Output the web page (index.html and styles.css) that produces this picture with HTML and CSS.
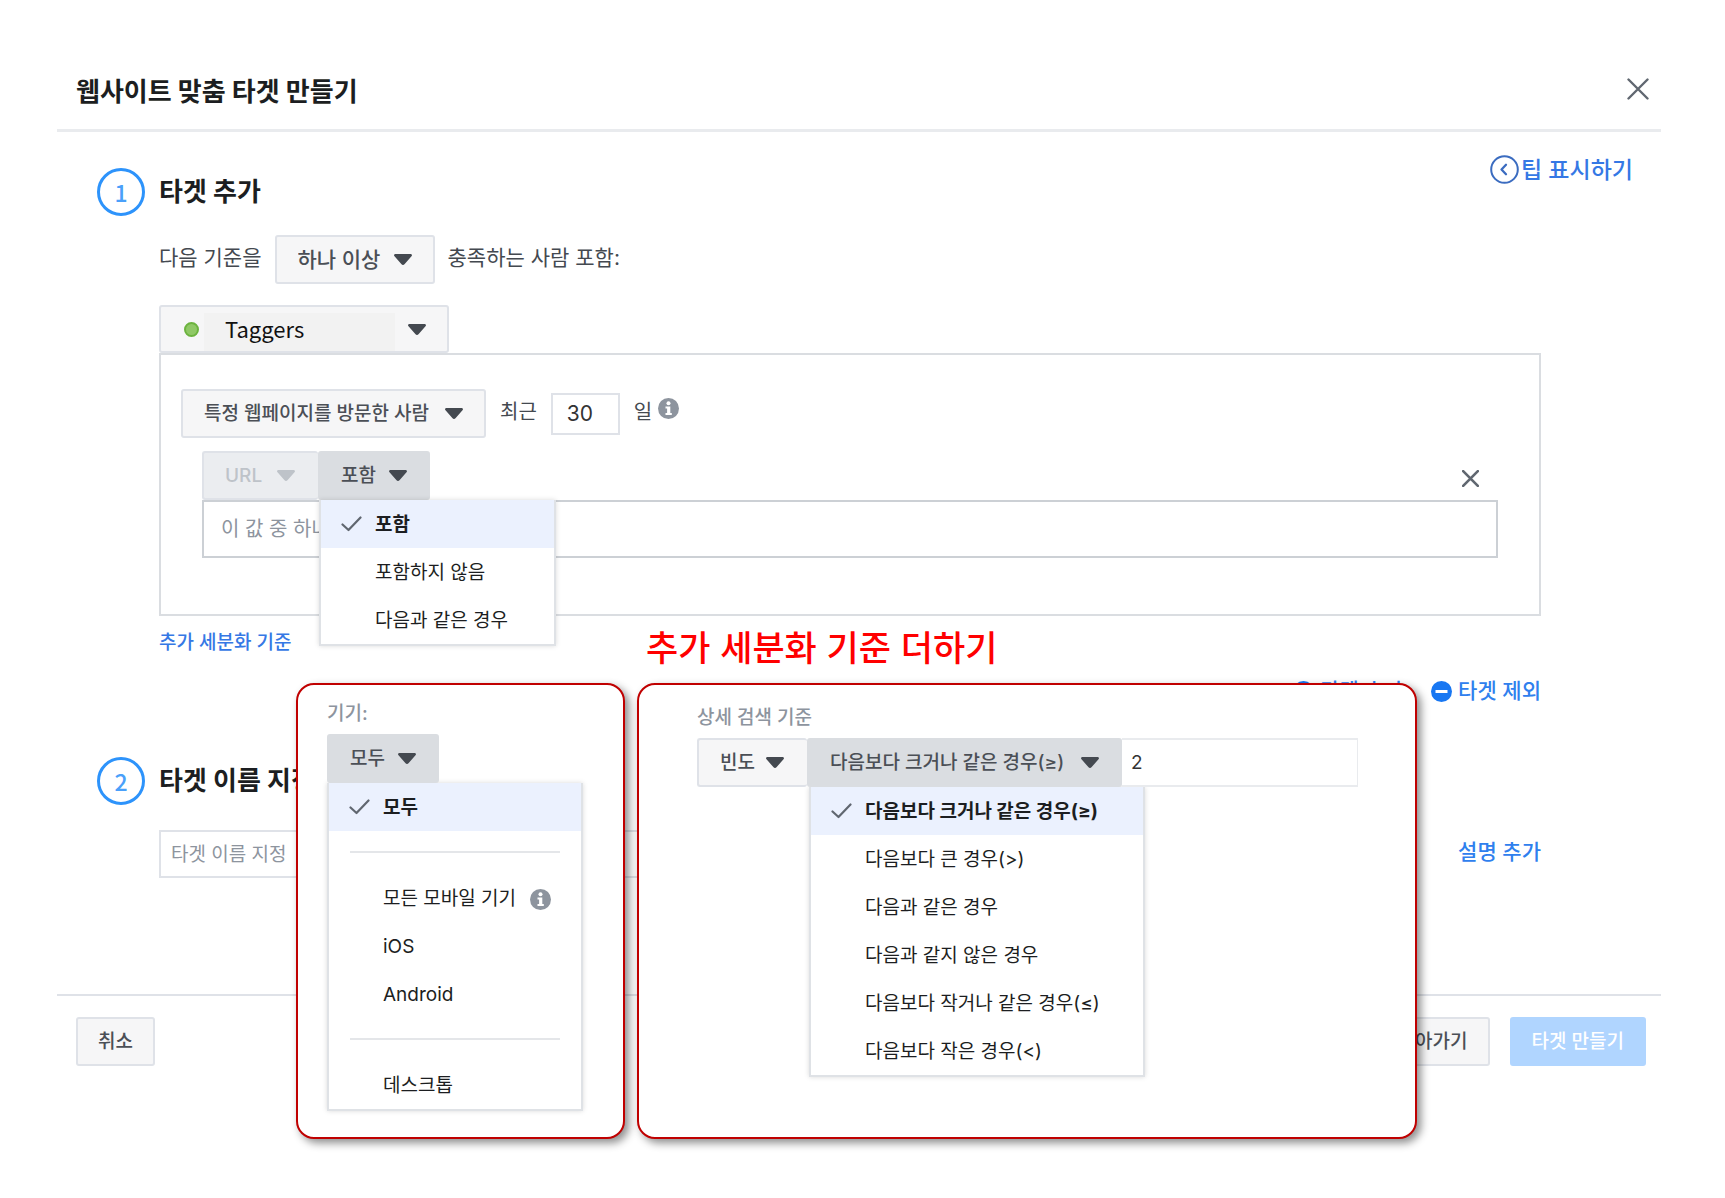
FILE: index.html
```html
<!DOCTYPE html>
<html lang="ko">
<head>
<meta charset="utf-8">
<meta name="viewport" content="width=device-width, initial-scale=1">
<title>웹사이트 맞춤 타겟 만들기</title>
<link rel="stylesheet" href="styles.css">
</head>
<body>
<svg class="sprite" aria-hidden="true">
  <symbol id="caret" viewBox="0 0 18 11"><path d="M1.5 0h15c1.300 0 2 1.300 1 2.300L10.700 10c-1 1.200-2.400 1.200-3.400 0L.5 2.300C-.5 1.300.2 0 1.500 0z" fill="currentColor"/></symbol>
  <symbol id="check" viewBox="0 0 21 16"><path d="M1.500 8.500l6 5.500L19.500 1.500" fill="none" stroke="currentColor" stroke-width="2.200" stroke-linecap="round" stroke-linejoin="round"/></symbol>
  <symbol id="cross" viewBox="0 0 22 22"><path d="M1.500 1.500l19 19M20.500 1.500l-19 19" fill="none" stroke="currentColor" stroke-linecap="round"/></symbol>
  <symbol id="info" viewBox="0 0 21 21"><circle cx="10.500" cy="10.500" r="10.500" fill="#8d949e"/><circle cx="10.500" cy="5.300" r="2" fill="#fff"/><path d="M7.500 8.500h4.800v6.500h1.500v2H7.500v-2h1.600v-4.500H7.500z" fill="#fff"/></symbol>
</svg>

<div class="page">
  <main class="dialog">
    <header class="dialog-header">
      <h1 class="title">웹사이트 맞춤 타겟 만들기</h1>
      <button class="icon-button dialog-close" type="button" aria-label="닫기"><svg class="cross"><use href="#cross"/></svg></button>
    </header>

    <section>
      <div class="step-head">
        <div class="step-title"><span class="step-number">1</span><h2 class="title">타겟 추가</h2></div>
        <a class="tip-link" href="#"><svg class="tip-icon" viewBox="0 0 29 29"><circle cx="14.500" cy="14.500" r="13.300" fill="none" stroke="#3b6cc0" stroke-width="2"/><path d="M16 9.800l-4.500 4.700L16 19.200" fill="none" stroke="#3b6cc0" stroke-width="2.300" stroke-linecap="round" stroke-linejoin="round"/></svg>팁 표시하기</a>
      </div>
      <div class="step-body">
        <div class="rule-row">
          <label class="rule-label" for="match">다음 기준을</label>
          <div class="picker picker-large"><select id="match"><option>하나 이상</option></select><svg class="caret"><use href="#caret"/></svg></div>
          <span class="rule-label">충족하는 사람 포함:</span>
        </div>

        <div class="picker source"><span class="dot"></span><select id="source" aria-label="픽셀"><option>Taggers</option></select><svg class="caret"><use href="#caret"/></svg></div>
        <div class="criteria">
          <div class="visit-row">
            <div class="picker picker-wide"><select id="event" aria-label="이벤트"><option>특정 웹페이지를 방문한 사람</option></select><svg class="caret"><use href="#caret"/></svg></div>
            <label class="visit-label" for="days">최근</label>
            <input class="days" id="days" type="text" value="30">
            <span class="visit-label">일</span>
            <svg class="info"><use href="#info"/></svg>
          </div>
          <div class="filter">
            <div class="filter-head">
              <div class="picker picker-wide picker-disabled"><select aria-label="항목" disabled><option>URL</option></select><svg class="caret"><use href="#caret"/></svg></div>
              <div class="picker picker-active">
                <select aria-label="조건"><option>포함</option></select><svg class="caret"><use href="#caret"/></svg>
                <ul class="menu filter-menu" role="listbox" aria-label="조건">
                  <li class="item selected" role="option" aria-selected="true"><svg class="check"><use href="#check"/></svg>포함</li>
                  <li class="item" role="option">포함하지 않음</li>
                  <li class="item" role="option">다음과 같은 경우</li>
                </ul>
              </div>
              <button class="icon-button filter-remove" type="button" aria-label="삭제"><svg class="cross cross-small"><use href="#cross"/></svg></button>
            </div>
            <input class="filter-value" type="text" aria-label="값" placeholder="이 값 중 하나">
          </div>
        </div>
        <a class="link" href="#">추가 세분화 기준</a>
        <div class="target-links">
          <a class="target-link" href="#"><svg class="info" viewBox="0 0 21 21"><circle cx="10.500" cy="10.500" r="10.500" fill="#1877f2"/><path d="M4.500 10.500h12M10.500 4.500v12" stroke="#fff" stroke-width="3"/></svg>타겟 추가</a>
          <a class="target-link" href="#"><svg class="info" viewBox="0 0 21 21"><circle cx="10.500" cy="10.500" r="10.500" fill="#1877f2"/><path d="M4.500 10.500h12" stroke="#fff" stroke-width="3"/></svg>타겟 제외</a>
        </div>
      </div>
    </section>

    <section class="step-two">
      <div class="step-title"><span class="step-number">2</span><h2 class="title">타겟 이름 지정</h2></div>
      <div class="name-row">
        <input class="name" type="text" aria-label="타겟 이름 지정" placeholder="타겟 이름 지정">
        <a class="target-link" href="#">설명 추가</a>
      </div>
    </section>

    <footer class="dialog-footer">
      <button class="button" type="button">취소</button>
      <div class="footer-actions">
        <button class="button" type="button">돌아가기</button>
        <button class="button primary" type="button" disabled>타겟 만들기</button>
      </div>
    </footer>
  </main>

  <aside class="notes">
    <h2 class="notes-title">추가 세분화 기준 더하기</h2>
    <div class="cards">
      <div class="card device-card">
        <label class="card-label" for="device">기기:</label>
        <div class="picker picker-active"><select id="device"><option>모두</option></select><svg class="caret"><use href="#caret"/></svg></div>
        <ul class="menu device-menu" role="listbox" aria-label="기기">
          <li class="item selected" role="option" aria-selected="true"><svg class="check"><use href="#check"/></svg>모두</li>
          <li class="divider" role="separator"></li>
          <li class="item" role="option">모든 모바일 기기<svg class="info"><use href="#info"/></svg></li>
          <li class="item" role="option">iOS</li>
          <li class="item" role="option">Android</li>
          <li class="divider" role="separator"></li>
          <li class="item" role="option">데스크톱</li>
        </ul>
      </div>
      <div class="card detail-card">
        <label class="card-label" for="metric">상세 검색 기준</label>
        <div class="detail-row">
          <div class="picker"><select id="metric"><option>빈도</option></select><svg class="caret"><use href="#caret"/></svg></div>
          <div class="picker picker-wide picker-active"><select aria-label="비교"><option>다음보다 크거나 같은 경우(≥)</option></select><svg class="caret"><use href="#caret"/></svg></div>
          <input class="count" type="text" aria-label="횟수" value="2">
        </div>
        <ul class="menu detail-menu" role="listbox" aria-label="비교">
          <li class="item selected" role="option" aria-selected="true"><svg class="check"><use href="#check"/></svg>다음보다 크거나 같은 경우(≥)</li>
          <li class="item" role="option">다음보다 큰 경우(&gt;)</li>
          <li class="item" role="option">다음과 같은 경우</li>
          <li class="item" role="option">다음과 같지 않은 경우</li>
          <li class="item" role="option">다음보다 작거나 같은 경우(≤)</li>
          <li class="item" role="option">다음보다 작은 경우(&lt;)</li>
        </ul>
      </div>
    </div>
  </aside>
</div>
</body>
</html>
```
FILE: styles.css
```css
* { box-sizing: border-box; }

body {
  margin: 0;
  background: #fff;
  color: #1c1e21;
  font-family: Inter, "Noto Sans CJK KR", sans-serif;
  font-size: 19px;
  line-height: 30px;
}

input, select, button { font: inherit; color: inherit; margin: 0; }
h1, h2, ul { margin: 0; padding: 0; }
ul { list-style: none; }
a { text-decoration: none; }
svg { display: block; flex: none; }

.sprite { position: absolute; width: 0; height: 0; }
.page { position: relative; min-height: 100vh; padding: 54px 64px 60px 57px; }

/* Header */
.dialog-header {
  display: flex;
  align-items: center;
  justify-content: space-between;
  height: 78px;
  padding: 0 12px 0 19px;
  border-bottom: 3px solid #e9ebee;
}
.title { font-size: 26px; font-weight: 700; line-height: 38px; }
.icon-button {
  display: flex;
  padding: 0;
  border: 0;
  background: none;
  color: #606770;
}
.dialog-close { margin-bottom: 5px; }
.cross { width: 22px; height: 22px; stroke-width: 2.4px; }
.cross-small { width: 17px; height: 17px; stroke-width: 3.4px; }

/* Steps */
.step-head {
  display: flex;
  align-items: flex-start;
  justify-content: space-between;
  padding: 23px 28px 0 0;
}
.step-head .step-title { margin-top: 13px; }
.step-title { display: flex; align-items: center; gap: 14px; padding-left: 40px; }
.step-number {
  display: flex;
  align-items: center;
  justify-content: center;
  width: 48px;
  height: 48px;
  border: 3px solid #2d93fb;
  border-radius: 50%;
  color: #4aa0fa;
  font-family: "Noto Sans CJK KR", sans-serif;
  font-size: 23px;
  font-weight: 500;
}
.tip-link {
  display: flex;
  align-items: center;
  gap: 2px;
  height: 29px;
  color: #3578e5;
  font-size: 23px;
  font-weight: 500;
}
.tip-icon { width: 29px; height: 29px; }
.step-body { padding: 19px 120px 0 102px; }
.rule-row { display: flex; align-items: center; gap: 13px; margin-bottom: 21px; }
.rule-label, .visit-label { padding-bottom: 3px; color: #444950; }
.rule-label { font-size: 21px; }

/* Drop-downs */
.picker { position: relative; width: max-content; color: #444950; }
.picker select {
  display: block;
  height: 49px;
  padding: 0 52px 0 21px;
  border: 2px solid #dfe2e8;
  border-radius: 3px;
  background: #f6f6f7;
  color: #4b4f56;
  font-weight: 500;
  appearance: none;
  opacity: 1;
}
.picker-large select { font-size: 21px; }
.picker-wide select { padding-right: 55px; }
.caret {
  position: absolute;
  top: 19px;
  right: 23px;
  width: 18px;
  height: 11px;
  pointer-events: none;
}
.picker-active select { border-color: #dadde1; background: #dadde1; }
.picker-disabled { color: #bec3c9; }
.picker-disabled select {
  border-right: 0;
  border-color: #dfe2e8;
  background: #ebedf0;
  color: #bec3c9;
}
.source select {
  width: 290px;
  height: 48px;
  padding: 0 52px 2px 64px;
  background: linear-gradient(#f2f2f2, #f2f2f2) 43px 6px / 191px 38px no-repeat #f6f6f7;
  color: #111;
  font-family: "Noto Sans CJK KR", sans-serif;
  font-size: 22px;
  font-weight: 400;
  line-height: 34px;
}
.dot {
  position: absolute;
  top: 17px;
  left: 25px;
  width: 15px;
  height: 15px;
  border: 2px solid #6cb33f;
  border-radius: 50%;
  background: #8fc866;
}

/* Criteria box */
.criteria { padding: 34px 41px 56px 20px; border: 2px solid #dadde1; }
.visit-row { display: flex; align-items: center; }
.visit-label { margin-left: 14px; font-size: 20px; }
.days {
  width: 69px;
  height: 42px;
  margin-left: 14px;
  padding: 0 14px;
  border: 2px solid #dfe2e8;
  color: #333;
  font-size: 21px;
}
.visit-row .info { margin: 0 0 10px 6px; }
.info { width: 21px; height: 21px; }
.filter { margin: 13px 0 0 21px; }
.filter-head { display: flex; align-items: center; }
.filter-remove { margin: 6px 19px 0 auto; }
.filter-value {
  display: block;
  width: 100%;
  height: 58px;
  padding: 0 17px;
  border: 2px solid #ccd0d5;
  color: #444950;
  font-size: 20px;
}
input::placeholder { color: #8d949e; opacity: 1; }

/* Menus */
.menu {
  border: 2px solid #dfe2e6;
  border-top: 0;
  background: #fff;
  box-shadow: 0 0 5px rgba(0, 0, 0, .15);
}
.filter-menu {
  position: absolute;
  z-index: 1;
  top: 49px;
  left: 1px;
  width: 237px;
}
.item {
  position: relative;
  display: flex;
  align-items: center;
  gap: 14px;
  height: 48px;
  padding: 2px 0 0 54px;
  color: #1c1e21;
}
.selected { background: #ebf1fe; font-weight: 700; }
.check {
  position: absolute;
  top: 16px;
  left: 20px;
  width: 21px;
  height: 16px;
  color: #606770;
}
.divider { height: 43px; padding: 20px 21px 0; }
.divider::before { content: ""; display: block; height: 2px; background: #e4e6e9; }

/* Links */
.link { display: block; width: max-content; margin-top: 12px; color: #3578e5; font-weight: 500; }
.target-links { display: flex; justify-content: flex-end; gap: 28px; margin-top: 18px; }
.target-link { display: flex; align-items: center; gap: 6px; color: #2f80ee; font-size: 21px; font-weight: 500; }

/* Audience name */
.step-two { margin-top: 51px; }
.name-row {
  display: flex;
  align-items: center;
  justify-content: space-between;
  padding: 25px 120px 0 102px;
}
.name-row .target-link { padding-bottom: 4px; }
.name {
  width: 72%;
  height: 48px;
  padding: 0 10px;
  border: 2px solid #dfe2e8;
}

/* Footer */
.dialog-footer {
  display: flex;
  justify-content: space-between;
  margin-top: 116px;
  padding: 21px 15px 0 19px;
  border-top: 2px solid #dfe2e8;
}
.footer-actions { display: flex; gap: 20px; }
.button {
  height: 49px;
  padding: 0 20px;
  border: 2px solid #dfe2e8;
  border-radius: 3px;
  background: #f6f6f7;
  color: #4b4f56;
  font-weight: 500;
}
.primary { border-color: #b0d5ff; background: #b0d5ff; color: #fff; }

/* Annotation cards over the dialog */
.notes { position: absolute; z-index: 2; top: 625px; left: 296px; }
.notes-title {
  margin-left: 350px;
  color: #f00;
  font-family: "Noto Sans CJK KR", sans-serif;
  font-size: 35px;
  font-weight: 500;
  line-height: 42px;
}
.cards { display: flex; gap: 12px; margin-top: 16px; }
.card {
  border: 2px solid #c00000;
  border-radius: 18px;
  background: #fff;
  box-shadow: 4px 4px 8px rgba(0, 0, 0, .45);
}
.card-label { display: block; margin-bottom: 5px; color: #8d949e; font-weight: 500; }
.device-card { width: 329px; padding: 14px 40px 25px 29px; }
.device-menu { width: 256px; }
.detail-card { width: 780px; padding: 18px 57px 60px 58px; }
.detail-row { display: flex; }
.detail-row .picker:first-child select { border-right: 0; }
.count {
  flex: 1;
  min-width: 0;
  padding: 0 9px;
  border: 2px solid #e9ebee;
  border-width: 2px 1px 2px 0;
  color: #333;
}
.detail-menu { width: 336px; margin-left: 112px; }
```
